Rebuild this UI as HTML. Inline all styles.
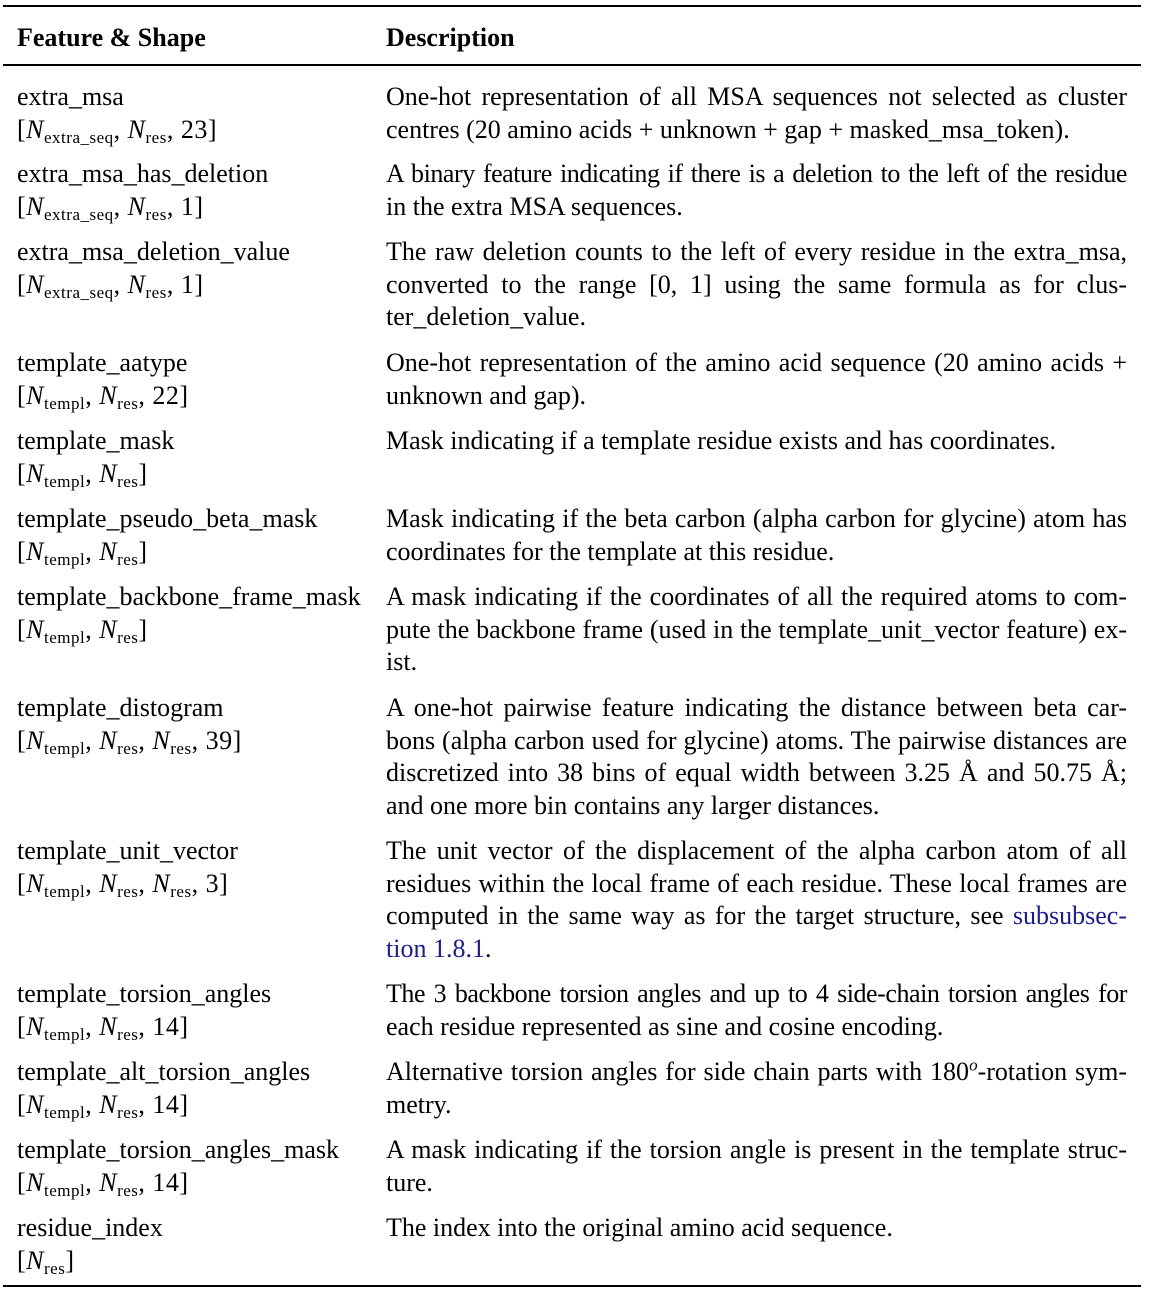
<!DOCTYPE html>
<html><head><meta charset="utf-8"><style>
body{margin:0;width:1149px;height:1293px;background:#fff;position:relative;font-family:"Liberation Serif",serif;font-size:26px;color:#000;overflow:hidden}
.r{position:absolute;left:3px;width:1138px;background:#000}
.c{position:absolute;line-height:32.5px;white-space:nowrap}
.L{left:17px}
.R{left:386px;width:741px}
.R div{text-align:justify;text-align-last:justify;white-space:normal}
.R div.e{text-align-last:left}
.R div.t{letter-spacing:-0.45px;word-spacing:-1px}
i{font-style:italic}
sub{font-size:17px;vertical-align:-5px;line-height:0}
a{color:#1a1a9a;text-decoration:none}
.m{letter-spacing:0.5px}
</style></head><body>
<div class="r" style="top:5px;height:2px"></div>
<div class="r" style="top:64px;height:1.5px"></div>
<div class="r" style="top:1285px;height:2px"></div>

<div class="c L" style="top:22px"><b>Feature &amp; Shape</b></div>
<div class="c R" style="top:22px"><b>Description</b></div>

<div class="c L" style="top:81px">extra_msa<br><span class="m">[<i>N</i><sub>extra_seq</sub>, <i>N</i><sub>res</sub>, 23]</span></div>
<div class="c R" style="top:81px"><div>One-hot representation of all MSA sequences not selected as cluster</div><div class="e">centres (20 amino acids + unknown + gap + masked_msa_token).</div></div>

<div class="c L" style="top:158px">extra_msa_has_deletion<br><span class="m">[<i>N</i><sub>extra_seq</sub>, <i>N</i><sub>res</sub>, 1]</span></div>
<div class="c R" style="top:158px"><div class="t">A binary feature indicating if there is a deletion to the left of the residue</div><div class="e">in the extra MSA sequences.</div></div>

<div class="c L" style="top:236px">extra_msa_deletion_value<br><span class="m">[<i>N</i><sub>extra_seq</sub>, <i>N</i><sub>res</sub>, 1]</span></div>
<div class="c R" style="top:236px"><div>The raw deletion counts to the left of every residue in the extra_msa,</div><div>converted to the range [0, 1] using the same formula as for clus-</div><div class="e">ter_deletion_value.</div></div>

<div class="c L" style="top:347px">template_aatype<br><span class="m">[<i>N</i><sub>templ</sub>, <i>N</i><sub>res</sub>, 22]</span></div>
<div class="c R" style="top:347px"><div>One-hot representation of the amino acid sequence (20 amino acids +</div><div class="e">unknown and gap).</div></div>

<div class="c L" style="top:425px">template_mask<br><span class="m">[<i>N</i><sub>templ</sub>, <i>N</i><sub>res</sub>]</span></div>
<div class="c R" style="top:425px"><div class="e">Mask indicating if a template residue exists and has coordinates.</div></div>

<div class="c L" style="top:503px">template_pseudo_beta_mask<br><span class="m">[<i>N</i><sub>templ</sub>, <i>N</i><sub>res</sub>]</span></div>
<div class="c R" style="top:503px"><div>Mask indicating if the beta carbon (alpha carbon for glycine) atom has</div><div class="e">coordinates for the template at this residue.</div></div>

<div class="c L" style="top:581px">template_backbone_frame_mask<br><span class="m">[<i>N</i><sub>templ</sub>, <i>N</i><sub>res</sub>]</span></div>
<div class="c R" style="top:581px"><div>A mask indicating if the coordinates of all the required atoms to com-</div><div>pute the backbone frame (used in the template_unit_vector feature) ex-</div><div class="e">ist.</div></div>

<div class="c L" style="top:692px">template_distogram<br><span class="m">[<i>N</i><sub>templ</sub>, <i>N</i><sub>res</sub>, <i>N</i><sub>res</sub>, 39]</span></div>
<div class="c R" style="top:692px"><div>A one-hot pairwise feature indicating the distance between beta car-</div><div>bons (alpha carbon used for glycine) atoms. The pairwise distances are</div><div>discretized into 38 bins of equal width between 3.25 Å and 50.75 Å;</div><div class="e">and one more bin contains any larger distances.</div></div>

<div class="c L" style="top:835px">template_unit_vector<br><span class="m">[<i>N</i><sub>templ</sub>, <i>N</i><sub>res</sub>, <i>N</i><sub>res</sub>, 3]</span></div>
<div class="c R" style="top:835px"><div>The unit vector of the displacement of the alpha carbon atom of all</div><div>residues within the local frame of each residue. These local frames are</div><div>computed in the same way as for the target structure, see <a>subsubsec-</a></div><div class="e"><a>tion 1.8.1</a>.</div></div>

<div class="c L" style="top:978px">template_torsion_angles<br><span class="m">[<i>N</i><sub>templ</sub>, <i>N</i><sub>res</sub>, 14]</span></div>
<div class="c R" style="top:978px"><div class="t">The 3 backbone torsion angles and up to 4 side-chain torsion angles for</div><div class="e">each residue represented as sine and cosine encoding.</div></div>

<div class="c L" style="top:1056px">template_alt_torsion_angles<br><span class="m">[<i>N</i><sub>templ</sub>, <i>N</i><sub>res</sub>, 14]</span></div>
<div class="c R" style="top:1056px"><div>Alternative torsion angles for side chain parts with 180<sup style="font-size:17px;line-height:0"><i>o</i></sup>-rotation sym-</div><div class="e">metry.</div></div>

<div class="c L" style="top:1134px">template_torsion_angles_mask<br><span class="m">[<i>N</i><sub>templ</sub>, <i>N</i><sub>res</sub>, 14]</span></div>
<div class="c R" style="top:1134px"><div>A mask indicating if the torsion angle is present in the template struc-</div><div class="e">ture.</div></div>

<div class="c L" style="top:1212px">residue_index<br><span class="m">[<i>N</i><sub>res</sub>]</span></div>
<div class="c R" style="top:1212px"><div class="e">The index into the original amino acid sequence.</div></div>
</body></html>
